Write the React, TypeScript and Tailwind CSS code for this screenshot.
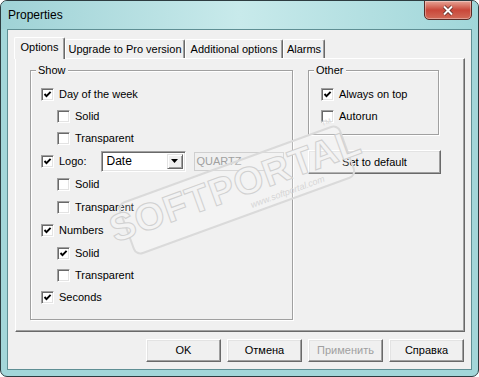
import React from "react";

const font = "font-['Liberation_Sans',Arial,sans-serif]";

const Check = ({ checked }: { checked?: boolean }) => (
  <span className="w-[13px] h-[13px] shrink-0 bg-white border border-t-[#a0a0a0] border-l-[#a0a0a0] border-r-white border-b-white shadow-[inset_1px_1px_0_#696969,inset_-1px_-1px_0_#e3e3e3] flex items-center justify-center">
    {checked && (
      <svg width="9" height="9" viewBox="0 0 9 9">
        <path d="M1.5 4 L3.5 6.2 L7.6 1.8" fill="none" stroke="#000" strokeWidth="1.9" />
      </svg>
    )}
  </span>
);

const Row = ({
  label,
  checked,
  indent,
  h,
}: {
  label: string;
  checked?: boolean;
  indent?: boolean;
  h: string;
}) => (
  <div className={`flex items-center gap-[5px] ${h} ${indent ? "pl-[26px]" : "pl-[10px]"}`}>
    <Check checked={checked} />
    <span>{label}</span>
  </div>
);

const Btn = ({ label, disabled }: { label: string; disabled?: boolean }) => (
  <button
    className={`w-[75px] h-[23px] bg-[#f0f0f0] border border-t-white border-l-white border-r-[#696969] border-b-[#696969] shadow-[inset_-1px_-1px_0_#a0a0a0,inset_1px_1px_0_#e3e3e3] text-[11px] ${
      disabled ? "text-[#a0a0a0]" : "text-black"
    }`}
  >
    {label}
  </button>
);

const Group = ({
  title,
  className,
  children,
}: {
  title: string;
  className: string;
  children: React.ReactNode;
}) => (
  <div className={`relative border border-[#a0a0a0] shadow-[inset_1px_1px_0_#fff,1px_1px_0_#fff] ${className}`}>
    <span className="absolute left-[5px] -top-[7px] px-[2px] bg-[#f0f0f0] leading-[13px]">{title}</span>
    {children}
  </div>
);

export default function App() {
  const tabs = [
    { label: "Upgrade to Pro version", w: "w-[120px]" },
    { label: "Additional options", w: "w-[98px]" },
    { label: "Alarms", w: "w-[42px]" },
  ];

  return (
    <div className={`${font} w-[479px] h-[377px] rounded-[7px] border border-[#2d3c40] bg-[#a3d6d9] flex flex-col overflow-hidden text-[11px] text-black`}>
      {/* title bar */}
      <div className="h-[28px] shrink-0 flex items-start bg-gradient-to-r from-[#9fd2d6] via-[#c8eaeb] to-[#a0d6d9]">
        <span className="pl-[7px] pt-[6px] text-[12px] leading-[16px]">Properties</span>
        <div className="ml-auto mr-[6px] -mt-[1px] w-[48px] h-[20px] rounded-b-[5px] border border-[#5a2b26] bg-gradient-to-b from-[#e6a497] via-[#c9473a] to-[#d26a58] flex items-center justify-center shadow-[inset_0_0_0_1px_rgba(255,255,255,0.35)]">
          <svg width="12" height="11" viewBox="0 0 12 11">
            <path d="M2 1.5 L10 9.5 M10 1.5 L2 9.5" stroke="#5b2a24" strokeWidth="3.6" />
            <path d="M2 1.5 L10 9.5 M10 1.5 L2 9.5" stroke="#fff" strokeWidth="2" />
          </svg>
        </div>
      </div>

      {/* client */}
      <div className="flex-1 mx-[6px] mb-[6px] bg-[#f0f0f0] border border-[#5f8f94] flex flex-col pt-[7px]">
        {/* tabs */}
        <div className="ml-[7px] flex items-end h-[21px]">
          <div className="relative z-10 -ml-[1px] w-[51px] h-[22px] -mb-[1px] bg-[#f0f0f0] border-t border-l border-white border-r border-r-[#696969] shadow-[inset_-1px_0_0_#a0a0a0] rounded-t-[2px] flex items-center justify-center pb-[2px]">
            Options
          </div>
          {tabs.map((t) => (
            <div
              key={t.label}
              className={`${t.w} h-[19px] bg-[#f0f0f0] border-t border-l border-white border-r border-r-[#696969] shadow-[inset_-1px_0_0_#a0a0a0] rounded-t-[2px] flex items-center justify-center`}
            >
              {t.label}
            </div>
          ))}
        </div>

        {/* panel */}
        <div className="relative ml-[7px] w-[450px] h-[274px] border border-t-white border-l-white border-r-[#696969] border-b-[#696969] shadow-[inset_-1px_-1px_0_#a0a0a0] flex gap-[15px] pl-[14px] pt-[11px]">
          <Group title="Show" className="w-[263px] h-[250px] pt-[12px]">
            <Row label="Day of the week" checked h="h-[22px]" />
            <Row label="Solid" indent h="h-[22px]" />
            <Row label="Transparent" indent h="h-[22px]" />
            <div className="flex items-center h-[24px] pl-[10px]">
              <Check checked />
              <span className="ml-[5px]">Logo:</span>
              <div className="ml-[14px] w-[85px] h-[21px] bg-white border border-t-[#a0a0a0] border-l-[#a0a0a0] border-r-white border-b-white shadow-[inset_1px_1px_0_#696969,inset_-1px_-1px_0_#e3e3e3] flex items-center p-[2px]">
                <span className="flex-1 pl-[3px] text-[12px]">Date</span>
                <span className="w-[16px] h-full bg-[#f0f0f0] border border-t-[#e3e3e3] border-l-[#e3e3e3] border-r-[#696969] border-b-[#696969] shadow-[inset_1px_1px_0_#fff,inset_-1px_-1px_0_#a0a0a0] flex items-center justify-center">
                  <svg width="7" height="4" viewBox="0 0 7 4">
                    <path d="M0 0 H7 L3.5 4 Z" fill="#000" />
                  </svg>
                </span>
              </div>
              <div className="ml-[8px] w-[90px] h-[19px] border border-[#cfcfcf] flex items-center pl-[2px] text-[#a0a0a0]">
                QUARTZ
              </div>
            </div>
            <Row label="Solid" indent h="h-[23px]" />
            <Row label="Transparent" indent h="h-[23px]" />
            <Row label="Numbers" checked h="h-[23px]" />
            <Row label="Solid" checked indent h="h-[22px]" />
            <Row label="Transparent" indent h="h-[22px]" />
            <Row label="Seconds" checked h="h-[22px]" />
          </Group>

          <div className="w-[133px] flex flex-col gap-[15px]">
            <Group title="Other" className="w-[131px] h-[65px] pt-[12px]">
              <div className="pl-[2px]">
                <Row label="Always on top" checked h="h-[22px]" />
                <Row label="Autorun" h="h-[22px]" />
              </div>
            </Group>
            <button className="w-[133px] h-[24px] bg-[#f0f0f0] border border-t-white border-l-white border-r-[#696969] border-b-[#696969] shadow-[inset_-1px_-1px_0_#a0a0a0,inset_1px_1px_0_#e3e3e3] text-[11px]">
              Set to default
            </button>
          </div>

          {/* watermark */}
          <div className="pointer-events-none absolute left-[103px] top-[103px] w-[236px] h-[56px] -rotate-[20deg] rounded-[8px] border-2 border-[#dadada] bg-white/20 flex flex-col items-center justify-center">
            <span className="text-[38px] leading-[38px] font-bold tracking-[1px] text-[#f3f3f3] [-webkit-text-stroke:1px_#d0d0d0]">
              SOFTPORTAL
            </span>
            <span className="text-[9px] italic leading-[10px] text-[#d6d6d6] self-end pr-[30px]">www.softportal.com</span>
            <span className="absolute right-[4px] -top-[12px] text-[7px] text-[#d6d6d6]">TM</span>
          </div>
        </div>

        {/* bottom buttons */}
        <div className="flex justify-end gap-[6px] pr-[7px] pt-[7px]">
          <Btn label="OK" />
          <Btn label="Отмена" />
          <Btn label="Применить" disabled />
          <Btn label="Справка" />
        </div>
      </div>
    </div>
  );
}
